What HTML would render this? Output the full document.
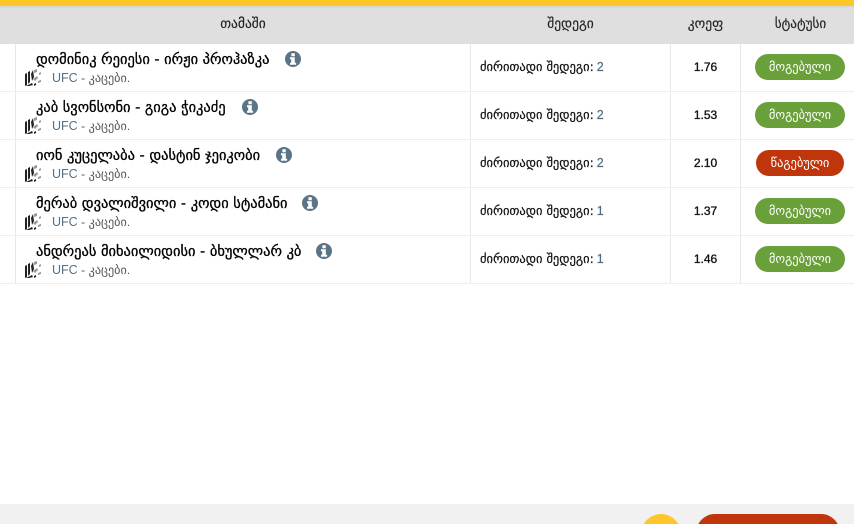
<!DOCTYPE html>
<html><head><meta charset="utf-8">
<style>
html,body{margin:0;padding:0;background:#fff;width:854px;height:524px;overflow:hidden}
#w{width:854px;height:524px;position:relative;overflow:hidden;font-family:"DejaVu Sans",sans-serif;color:#000}
.a{position:absolute}
.h{top:6px;height:37px;line-height:37px;font-size:13.5px;text-align:center;color:#222;white-space:nowrap;-webkit-text-stroke:.15px #222}
.l{height:1px;left:0;width:854px;background:#eee}
.v{width:1px;top:44px;height:240px;background:#e8e8e8}
.n{left:36px;font-size:14.45px;line-height:16px;white-space:nowrap;-webkit-text-stroke:.3px #000}
.s{left:52px;font-size:12.5px;line-height:14px;color:#557083;white-space:nowrap;font-family:"Liberation Sans","DejaVu Sans",sans-serif}
.s span{color:#555;font-size:12.2px}
.r{left:480px;font-size:12.5px;line-height:14px;color:#111;white-space:nowrap;-webkit-text-stroke:.2px #111}
.r b{font-weight:400;font-size:12.5px;color:#4f6d80;font-family:"Liberation Sans",sans-serif;margin-left:-1px;-webkit-text-stroke:.2px #4f6d80}
.k{left:671px;width:69px;text-align:center;font-size:12px;line-height:14px;color:#111;font-family:"Liberation Sans",sans-serif;-webkit-text-stroke:.35px #111}
.b{height:26px;line-height:26px;border-radius:13px;color:#fff;font-size:12.4px;text-align:center;white-space:nowrap}
.g{left:755px;width:90px;background:#6aa03a}
.o{left:756px;width:88px;background:#bf360c}
svg{position:absolute;display:block}
</style></head><body><div id="w">
<div class="a" style="left:0;top:0;width:854px;height:6px;background:#ffc629"></div>
<div class="a" style="left:0;top:6px;width:854px;height:38px;background:linear-gradient(#d6d6d6,#dfdfdf 3px)"></div>
<div class="a h" style="left:16px;width:454px">თამაში</div>
<div class="a h" style="left:471px;width:199px">შედეგი</div>
<div class="a h" style="left:671px;width:69px">კოეფ</div>
<div class="a h" style="left:744px;width:113px;font-size:13.2px">სტატუსი</div>

<div class="a v" style="left:15px"></div>
<div class="a v" style="left:470px"></div>
<div class="a v" style="left:670px"></div>
<div class="a v" style="left:740px"></div>
<div class="a l" style="top:91px"></div>
<div class="a l" style="top:139px"></div>
<div class="a l" style="top:187px"></div>
<div class="a l" style="top:235px"></div>
<div class="a l" style="top:283px"></div>

<svg width="0" height="0" style="left:0;top:0"><defs>
<g id="u"><path d="M0 17V5l2-1v12zM3 15V3l2-1v11zM6 5l2-4 1 7-2 4zM1 17l6-3 1 2-4 1zM9 15l2-1v2l-2 1z" fill="#222"/><path d="M9 1l3-1v3L9 4zM8 10l4-3 1 2-3 3zM13 12l3-1v2l-3 1zM14 4l2-1v2l-2 1z" fill="#999"/></g>
<g id="i"><circle cx="8" cy="8" r="8" fill="#5b7486"/><path d="M6.4 2.2h3.4v3H6.4zM5 6.2h4.8v5.6h1.3v2H5v-2h1.2V8.2H5z" fill="#fff"/></g>
</defs></svg>

<div class="a n" style="top:52px">დომინიკ რეიესი - ირჟი პროჰაზკა</div>
<svg style="left:285px;top:51px" width="16" height="16"><use href="#i"/></svg>
<svg style="left:25px;top:69px" width="18" height="18"><use href="#u"/></svg>
<div class="a s" style="top:71px">UFC <span>- კაცები.</span></div>
<div class="a r" style="top:60px">ძირითადი შედეგი: <b>2</b></div>
<div class="a k" style="top:60px">1.76</div>
<div class="a b g" style="top:54px">მოგებული</div>

<div class="a n" style="top:100px">კაბ სვონსონი - გიგა ჭიკაძე</div>
<svg style="left:242px;top:99px" width="16" height="16"><use href="#i"/></svg>
<svg style="left:25px;top:117px" width="18" height="18"><use href="#u"/></svg>
<div class="a s" style="top:119px">UFC <span>- კაცები.</span></div>
<div class="a r" style="top:108px">ძირითადი შედეგი: <b>2</b></div>
<div class="a k" style="top:108px">1.53</div>
<div class="a b g" style="top:102px">მოგებული</div>

<div class="a n" style="top:148px">იონ კუცელაბა - დასტინ ჯეიკობი</div>
<svg style="left:276px;top:147px" width="16" height="16"><use href="#i"/></svg>
<svg style="left:25px;top:165px" width="18" height="18"><use href="#u"/></svg>
<div class="a s" style="top:167px">UFC <span>- კაცები.</span></div>
<div class="a r" style="top:156px">ძირითადი შედეგი: <b>2</b></div>
<div class="a k" style="top:156px">2.10</div>
<div class="a b o" style="top:150px">წაგებული</div>

<div class="a n" style="top:196px">მერაბ დვალიშვილი - კოდი სტამანი</div>
<svg style="left:302px;top:195px" width="16" height="16"><use href="#i"/></svg>
<svg style="left:25px;top:213px" width="18" height="18"><use href="#u"/></svg>
<div class="a s" style="top:215px">UFC <span>- კაცები.</span></div>
<div class="a r" style="top:204px">ძირითადი შედეგი: <b>1</b></div>
<div class="a k" style="top:204px">1.37</div>
<div class="a b g" style="top:198px">მოგებული</div>

<div class="a n" style="top:244px">ანდრეას მიხაილიდისი - ბხულლარ კბ</div>
<svg style="left:316px;top:243px" width="16" height="16"><use href="#i"/></svg>
<svg style="left:25px;top:261px" width="18" height="18"><use href="#u"/></svg>
<div class="a s" style="top:263px">UFC <span>- კაცები.</span></div>
<div class="a r" style="top:252px">ძირითადი შედეგი: <b>1</b></div>
<div class="a k" style="top:252px">1.46</div>
<div class="a b g" style="top:246px">მოგებული</div>

<div class="a" style="left:0;top:504px;width:854px;height:20px;background:#f1f1f1"></div>
<svg style="left:640px;top:514px" width="204" height="10"><path d="M3.7 10A20 20 0 0 1 38.3 10z" fill="#ffc629"/><path d="M58.3 10A19 19 0 0 1 75 0H181A19 19 0 0 1 197.7 10z" fill="#bf360c"/></svg>
</div></body></html>
